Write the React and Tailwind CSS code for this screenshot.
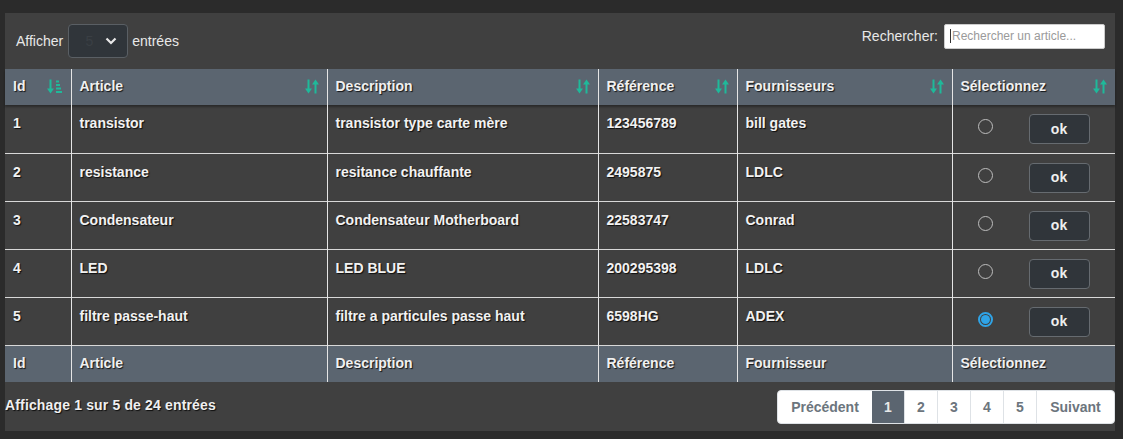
import React from "react";

const rows = [
  ["1", "transistor", "transistor type carte mère", "123456789", "bill gates", false],
  ["2", "resistance", "resitance chauffante", "2495875", "LDLC", false],
  ["3", "Condensateur", "Condensateur Motherboard", "22583747", "Conrad", false],
  ["4", "LED", "LED BLUE", "200295398", "LDLC", false],
  ["5", "filtre passe-haut", "filtre a particules passe haut", "6598HG", "ADEX", true],
];

function SortIcon() {
  return (
    <svg width="14" height="17" viewBox="0 0 14 16" className="shrink-0">
      <g fill="#1fb99a">
        <rect x="2.5" y="1" width="2" height="10" />
        <polygon points="0,10 7,10 3.5,15" />
        <rect x="9.5" y="5" width="2" height="10" />
        <polygon points="7,6 14,6 10.5,1" />
      </g>
    </svg>
  );
}

function SortAmountIcon() {
  return (
    <svg width="16" height="17" viewBox="0 0 16 16" className="shrink-0">
      <g fill="#1fb99a">
        <rect x="2.5" y="1" width="2" height="10" />
        <polygon points="0,10 7,10 3.5,15" />
        <rect x="9" y="2" width="3" height="2" />
        <rect x="9" y="5.5" width="4" height="2" />
        <rect x="9" y="9" width="5" height="2" />
        <rect x="9" y="12.5" width="6" height="2" />
      </g>
    </svg>
  );
}

const shadow = "[text-shadow:1px_1px_1px_rgba(0,0,0,0.8)]";

export default function App() {
  const heads = [
    ["Id", "w-[66px]", "amount"],
    ["Article", "w-[256px]", "sort"],
    ["Description", "w-[271px]", "sort"],
    ["Référence", "w-[139px]", "sort"],
    ["Fournisseurs", "w-[215px]", "sort"],
    ["Sélectionnez", "w-[163px]", "sort"],
  ];
  const foot = ["Id", "Article", "Description", "Référence", "Fournisseur", "Sélectionnez"];
  return (
    <div className="w-[1123px] h-[439px] bg-[#2b2b2b] pt-[13px] pl-[5px] font-['Liberation_Sans',Arial,sans-serif]">
      <div className="w-[1110px] h-[418px] bg-[#404040] flex flex-col">
        <div className="h-[56px] flex items-center justify-between pl-[11px] pr-[10px]">
          <div className="flex items-center text-[14px] text-[#e8e8e8]">
            <span>Afficher</span>
            <div className="ml-[5px] w-[60px] h-[34px] rounded-[4px] border border-[#5a5f64] bg-[#30353a] flex items-center justify-end pr-[10px]">
              <span className="mr-[12px] text-[#3a3f44]">5</span>
              <svg width="12" height="8" viewBox="0 0 12 8">
                <path d="M1.5 1.5 L6 6 L10.5 1.5" stroke="#e8e8e8" strokeWidth="2.2" fill="none" />
              </svg>
            </div>
            <span className="ml-[4px]">entrées</span>
          </div>
          <div className="flex items-center text-[14px] text-[#e8e8e8] -mt-[10px]">
            <span>Rechercher:</span>
            <div className="ml-[6px] w-[161px] h-[25px] bg-white border border-[#ccc] rounded-[2px] flex items-center pl-[5px] text-[12px] text-[#9a9a9a]">
              <span className="w-px h-[14px] bg-[#333] mr-[1px]" />
              Rechercher un article...
            </div>
          </div>
        </div>
        <table className="border-collapse table-fixed w-[1110px] text-[14px] font-bold">
          <thead>
            <tr className="h-[36px] bg-[#5b6570] shadow-[0_2px_2px_rgba(0,0,0,0.35)]">
              {heads.map(([t, w, ic]) => (
                <th
                  key={t}
                  className={`${w} p-0 align-middle text-left border-l border-[#e5e5e5] first:border-l-0`}
                >
                  <div className={`flex items-center justify-between pl-[8px] pr-[8px] -mt-[1px] text-[#f0f0f0] ${shadow}`}>
                    <span>{t}</span>
                    {ic === "amount" ? <SortAmountIcon /> : <SortIcon />}
                  </div>
                </th>
              ))}
            </tr>
          </thead>
          <tbody>
            {rows.map((r) => (
              <tr key={r[0]} className="h-[48px] border-t border-[#d8d8d8] first:border-t-0">
                {r.slice(0, 5).map((c, i) => (
                  <td
                    key={i}
                    className={`p-0 pl-[8px] pt-[8px] align-top leading-[20px] text-[#f2f2f2] ${shadow} border-l border-[#e5e5e5] first:border-l-0`}
                  >
                    {c}
                  </td>
                ))}
                <td className="p-0 align-top border-l border-[#e5e5e5]">
                  <div className="flex items-start pl-[25px] pt-[9px]">
                    {r[5] ? (
                      <span className="mt-[5px] w-[15px] h-[15px] rounded-full border-[2px] border-[#2fa4e7] flex items-center justify-center">
                        <span className="w-[9px] h-[9px] rounded-full bg-[#2fa4e7]" />
                      </span>
                    ) : (
                      <span className="mt-[5px] w-[15px] h-[15px] rounded-full border border-[#bdbdbd]" />
                    )}
                    <button className="ml-[36px] w-[61px] h-[30px] rounded-[4px] border border-[#666b70] bg-[#30353a] text-[#eeeeee] text-[14px] font-bold font-['Liberation_Sans',Arial,sans-serif]">
                      ok
                    </button>
                  </div>
                </td>
              </tr>
            ))}
          </tbody>
          <tfoot>
            <tr className="h-[37px] bg-[#5b6570] border-t border-[#d8d8d8]">
              {foot.map((t) => (
                <td
                  key={t}
                  className={`p-0 pl-[8px] align-middle text-[#f0f0f0] ${shadow} border-l border-[#e5e5e5] first:border-l-0`}
                >
                  {t}
                </td>
              ))}
            </tr>
          </tfoot>
        </table>
        <div className="flex items-start justify-between mt-[8px]">
          <span className={`text-[14px] font-bold text-[#f0f0f0] tracking-[0.15px] ${shadow} mt-[5px]`}>
            Affichage 1 sur 5 de 24 entrées
          </span>
          <div className="flex h-[34px] bg-white rounded-[4px] border border-[#dee2e6] text-[14px] font-bold text-[#6c757d] overflow-hidden">
            <span className="w-[94px] flex items-center justify-center">Précédent</span>
            <span className="w-[32px] flex items-center justify-center bg-[#5b6570] text-[#e8e8e8]">1</span>
            <span className="w-[33px] flex items-center justify-center border-l border-[#dee2e6]">2</span>
            <span className="w-[33px] flex items-center justify-center border-l border-[#dee2e6]">3</span>
            <span className="w-[33px] flex items-center justify-center border-l border-[#dee2e6]">4</span>
            <span className="w-[33px] flex items-center justify-center border-l border-[#dee2e6]">5</span>
            <span className="flex-1 w-[78px] flex items-center justify-center border-l border-[#dee2e6]">Suivant</span>
          </div>
        </div>
      </div>
    </div>
  );
}
